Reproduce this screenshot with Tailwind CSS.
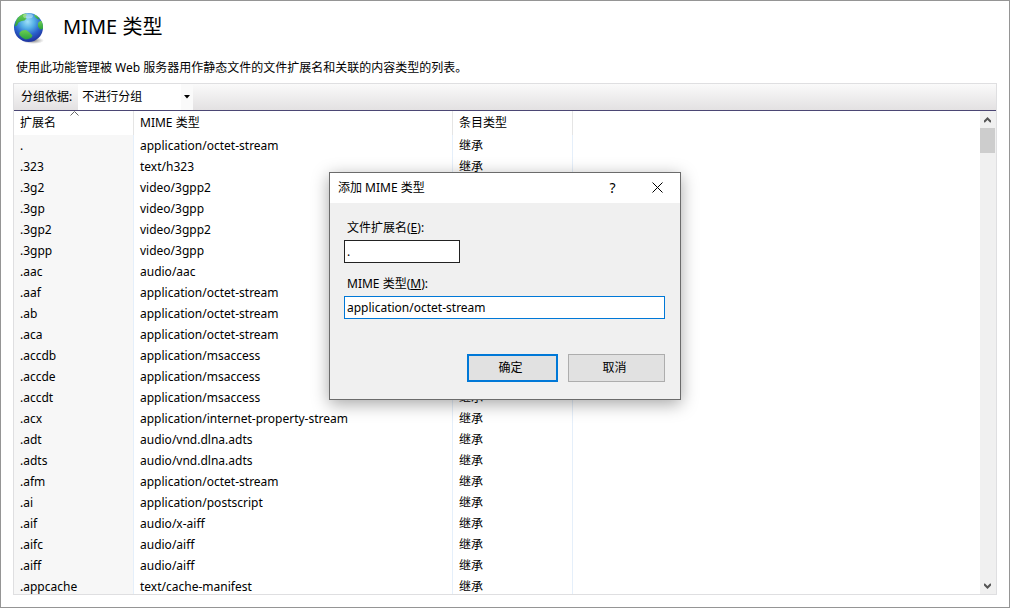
<!DOCTYPE html>
<html lang="zh-CN">
<head>
<meta charset="utf-8">
<title>MIME 类型</title>
<script src="https://cdn.jsdelivr.net/npm/@tailwindcss/browser@4"></script>
</head>
<body class="relative flex h-screen flex-col overflow-hidden border border-[#959595] bg-white px-3 pb-3 font-['Noto_Sans','Noto_Sans_CJK_SC',sans-serif] text-xs text-black">
<header class="flex h-[52px] shrink-0 items-center gap-[18px]">
  <svg class="mt-0.5 h-8 w-8 shrink-0" viewBox="0 0 32 32" aria-hidden="true">
    <defs>
      <radialGradient id="sea" cx="47%" cy="30%" r="66%"><stop offset="0" stop-color="#9fe0f8"/><stop offset=".35" stop-color="#55b0e6"/><stop offset=".7" stop-color="#2a62cc"/><stop offset="1" stop-color="#2038a4"/></radialGradient>
      <linearGradient id="land" x1="0" y1="0" x2="0" y2="1"><stop offset="0" stop-color="#6ccf52"/><stop offset="1" stop-color="#2aa03e"/></linearGradient>
      <radialGradient id="shade"><stop offset="0" stop-color="#555" stop-opacity=".8"/><stop offset="1" stop-color="#777" stop-opacity="0"/></radialGradient>
      <clipPath id="ball"><circle cx="15.500" cy="15.500" r="14.500"/></clipPath>
    </defs>
    <ellipse cx="20" cy="28.500" rx="11" ry="3.500" fill="url(#shade)"/>
    <circle cx="15.500" cy="15.500" r="14.500" fill="url(#sea)"/>
    <g clip-path="url(#ball)" fill="url(#land)">
      <path d="M3 9l2-4 4-3 4-.5 1 1.500-1.500 1.500 1 2-2 2-3 .5-3 1.500-1.500 3-2.500 1z"/>
      <path d="M6.500 20.500l2.500-2 4-.5 3 2 3.500 3.500-1 2-3 1.500-3 .5-3.500-2-2.500-2.500z"/>
      <path d="M25 11l2-2h3v8l-3 .5-2-3z"/>
      <path d="M21 2.500l3 1 3 4-2.500-.5-2.500-2z"/>
    </g>
    <ellipse cx="15" cy="4" rx="5" ry="2.500" fill="#fff" opacity=".35"/>
  </svg>
  <h1 class="text-xl">MIME 类型</h1>
</header>
<p class="flex h-[30px] shrink-0 items-center px-[3px]">使用此功能管理被 Web 服务器用作静态文件的文件扩展名和关联的内容类型的列表。</p>
<main class="flex min-h-0 flex-1 flex-col border border-[#dfdfe1]">
  <div class="flex h-[27px] shrink-0 items-stretch border-b border-[#4b4674] bg-linear-to-b from-[#fafafa] to-[#e3e1e2]">
    <label for="group" class="flex items-center pr-[6px] pl-[7px]">分组依据:</label>
    <div class="relative w-[115px] bg-white">
      <select id="group" class="h-full w-full appearance-none bg-transparent pl-1 outline-none"><option>不进行分组</option></select>
      <span class="pointer-events-none absolute inset-y-0 right-0 flex w-3 items-center justify-center bg-[#fafafa]"><svg width="6" height="4" viewBox="0 0 6 4" aria-hidden="true"><path d="M0 0h6L3 3.500z"/></svg></span>
    </div>
  </div>
  <div class="flex min-h-0 flex-1">
    <div class="min-w-0 flex-1 overflow-hidden">
      <table class="w-full table-fixed border-separate border-spacing-0 text-left leading-5 [&_td]:h-[21px] [&_td]:border-r [&_td]:border-[#e5effa] [&_td]:p-0 [&_td]:pl-[6px] [&_td:first-child]:bg-[#f7f7f7] [&_td:last-child]:border-0 [&_th]:h-6 [&_th]:border-r [&_th]:border-[#e5e5e5] [&_th]:p-0 [&_th]:pl-[6px] [&_th]:font-normal [&_th:last-child]:border-0">
        <colgroup><col class="w-[120px]"><col class="w-[319px]"><col class="w-[120px]"><col></colgroup>
        <thead><tr><th class="relative">扩展名<svg class="absolute top-0 left-14" width="9" height="5" viewBox="0 0 9 5" fill="none" stroke="#666" aria-hidden="true"><path d="M.5 4.500l4-4 4 4"/></svg></th><th>MIME 类型</th><th>条目类型</th><th></th></tr></thead>
        <tbody>
          <tr><td>.</td><td>application/octet-stream</td><td>继承</td><td></td></tr>
          <tr><td>.323</td><td>text/h323</td><td>继承</td><td></td></tr>
          <tr><td>.3g2</td><td>video/3gpp2</td><td>继承</td><td></td></tr>
          <tr><td>.3gp</td><td>video/3gpp</td><td>继承</td><td></td></tr>
          <tr><td>.3gp2</td><td>video/3gpp2</td><td>继承</td><td></td></tr>
          <tr><td>.3gpp</td><td>video/3gpp</td><td>继承</td><td></td></tr>
          <tr><td>.aac</td><td>audio/aac</td><td>继承</td><td></td></tr>
          <tr><td>.aaf</td><td>application/octet-stream</td><td>继承</td><td></td></tr>
          <tr><td>.ab</td><td>application/octet-stream</td><td>继承</td><td></td></tr>
          <tr><td>.aca</td><td>application/octet-stream</td><td>继承</td><td></td></tr>
          <tr><td>.accdb</td><td>application/msaccess</td><td>继承</td><td></td></tr>
          <tr><td>.accde</td><td>application/msaccess</td><td>继承</td><td></td></tr>
          <tr><td>.accdt</td><td>application/msaccess</td><td>继承</td><td></td></tr>
          <tr><td>.acx</td><td>application/internet-property-stream</td><td>继承</td><td></td></tr>
          <tr><td>.adt</td><td>audio/vnd.dlna.adts</td><td>继承</td><td></td></tr>
          <tr><td>.adts</td><td>audio/vnd.dlna.adts</td><td>继承</td><td></td></tr>
          <tr><td>.afm</td><td>application/octet-stream</td><td>继承</td><td></td></tr>
          <tr><td>.ai</td><td>application/postscript</td><td>继承</td><td></td></tr>
          <tr><td>.aif</td><td>audio/x-aiff</td><td>继承</td><td></td></tr>
          <tr><td>.aifc</td><td>audio/aiff</td><td>继承</td><td></td></tr>
          <tr><td>.aiff</td><td>audio/aiff</td><td>继承</td><td></td></tr>
          <tr><td>.appcache</td><td>text/cache-manifest</td><td>继承</td><td></td></tr>
        </tbody>
      </table>
    </div>
    <div class="flex w-4 shrink-0 flex-col bg-[#f0f0f0] pr-px">
      <button aria-label="向上滚动" class="flex h-[17px] items-center justify-center"><svg width="7" height="6" viewBox="0 0 7 6" fill="none" stroke="#555" stroke-width="2" aria-hidden="true"><path d="M0 5L3.500 1.500 7 5"/></svg></button>
      <div class="h-[25px] bg-[#cdcdcd]"></div>
      <button aria-label="向下滚动" class="mt-auto flex h-[17px] items-center justify-center"><svg width="7" height="6" viewBox="0 0 7 6" fill="none" stroke="#555" stroke-width="2" aria-hidden="true"><path d="M0 1L3.500 4.500 7 1"/></svg></button>
    </div>
  </div>
</main>
<section role="dialog" aria-labelledby="dlg" class="absolute top-[171px] left-[328px] flex w-[352px] flex-col border border-[#6b6b6b] bg-[#f0f0f0] shadow-[0_4px_16px_rgba(0,0,0,0.35)]">
  <div class="flex h-[30px] items-center bg-white pb-px pl-2">
    <h2 id="dlg" class="flex-1">添加 MIME 类型</h2>
    <button aria-label="帮助" class="flex h-full w-[45px] items-center justify-center text-sm">?</button>
    <button aria-label="关闭" class="flex h-full w-[45px] items-center justify-center"><svg width="11" height="11" viewBox="0 0 11 11" stroke="#000" aria-hidden="true"><path d="M.5 .5l10 10M10.500 .5l-10 10"/></svg></button>
  </div>
  <form class="flex flex-col items-start pt-4 pr-[15px] pb-[17px] pl-[14px]">
    <label for="ext" class="pb-1 pl-[3px] leading-[17px]">文件扩展名(<u>E</u>):</label>
    <input id="ext" value="." class="h-[23px] w-[116px] border border-[#222] bg-white px-0.5 outline-none">
    <label for="mime" class="pt-3 pb-1 pl-[3px] leading-[17px]">MIME 类型(<u>M</u>):</label>
    <input id="mime" value="application/octet-stream" class="h-[23px] w-full border border-[#0078d7] bg-white px-0.5 outline-none">
    <div class="mt-[35px] flex gap-[10px] self-end">
      <button type="button" class="h-7 w-[91px] border-2 border-[#0078d7] bg-[#e1e1e1] pr-1">确定</button>
      <button type="button" class="h-7 w-[97px] border border-[#adadad] bg-[#e1e1e1] pr-1">取消</button>
    </div>
  </form>
</section>
</body>
</html>
